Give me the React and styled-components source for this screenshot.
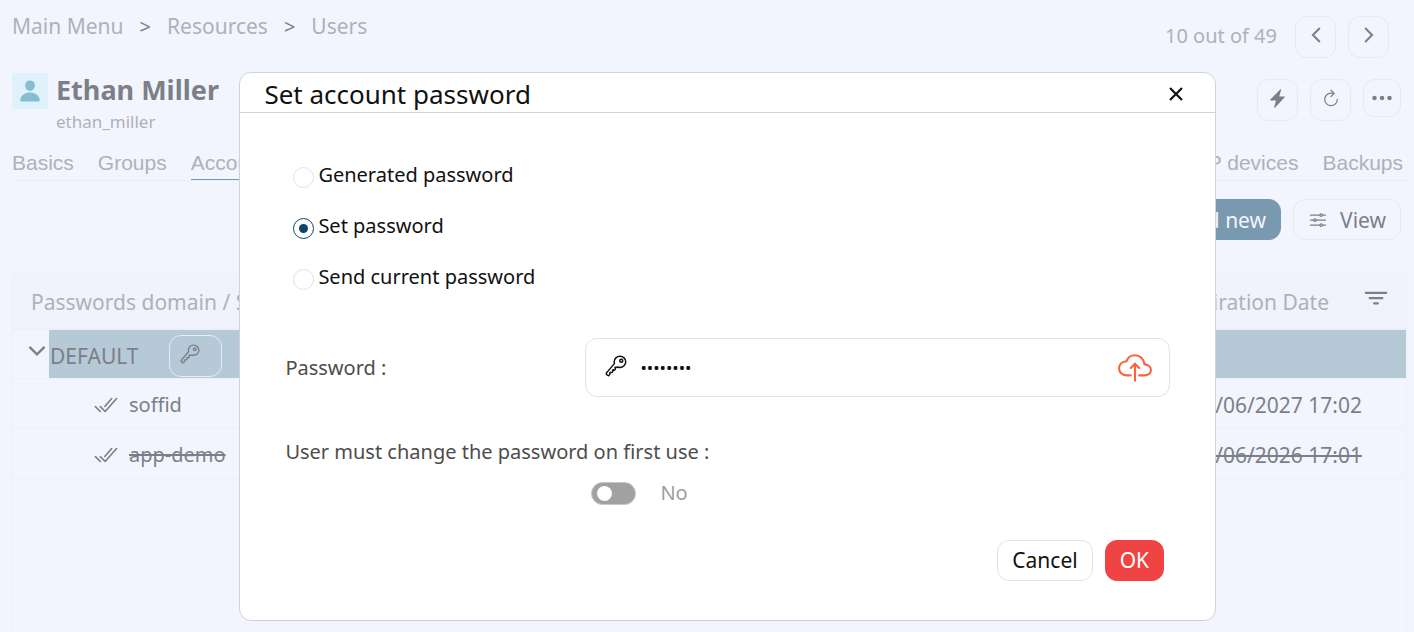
import React, { useState } from "react";
import styled, { createGlobalStyle } from "styled-components";
import {
  IoCheckmarkDoneOutline,
  IoChevronBackSharp,
  IoChevronDownSharp,
  IoChevronForwardSharp,
  IoCloseSharp,
  IoCloudUploadOutline,
  IoEllipsisHorizontal,
  IoFilter,
  IoKeyOutline,
  IoOptionsOutline,
  IoPerson,
  IoRefreshOutline,
} from "react-icons/io5";

const GlobalStyle = createGlobalStyle`
  * {
    box-sizing: border-box;
  }

  body {
    margin: 0;
    background: #f2f5fe;
    color: #7c7f88;
    font-family: "Noto Sans", sans-serif;
    font-size: 20px;
    line-height: 28px;
  }

  button,
  input {
    font: inherit;
    color: inherit;
  }
`;

const Page = styled.div`
  display: flex;
  flex-direction: column;
  min-height: 100vh;
  padding: 0 7px 0 12px;
`;

const TopBar = styled.header`
  display: flex;
  justify-content: space-between;
  align-items: flex-start;
  padding: 12px 18px 0 0;
`;

const Breadcrumb = styled.nav`
  display: flex;
  gap: 16px;
  font-size: 21px;

  a {
    color: #aeb1b9;
    text-decoration: none;
  }
`;

const Separator = styled.span`
  font-size: 20px;
  line-height: 30px;
`;

const Pager = styled.div`
  display: flex;
  align-items: center;
  gap: 12px;
  padding-top: 4px;
  color: #aeb1b9;
`;

const PagerText = styled.span`
  padding: 0 6px 2px 0;
`;

const IconButton = styled.button`
  display: flex;
  align-items: center;
  justify-content: center;
  width: ${(props) => (props.$small ? "38px" : "41px")};
  height: ${(props) => (props.$small ? "38px" : "42px")};
  padding: ${(props) => (props.$small ? "0" : "0 0 4px")};
  background: transparent;
  border: 1px solid #e6e9f2;
  border-radius: 12px;
  color: #7c7f88;
  cursor: pointer;
`;

const UserBar = styled.div`
  display: flex;
  justify-content: space-between;
  align-items: flex-start;
  padding: 15px 6px 0 0;
`;

const User = styled.div`
  display: flex;
  gap: 8px;
`;

const Avatar = styled.div`
  display: flex;
  align-items: center;
  justify-content: center;
  width: 36px;
  height: 36px;
  background: #dff1fa;
  color: #86bdd1;
`;

const UserName = styled.h1`
  margin: 0;
  font-size: 27px;
  line-height: 34px;
`;

const UserLogin = styled.div`
  margin-top: 3px;
  font-size: 17px;
  line-height: 24px;
  color: #aeb1b9;
`;

const Actions = styled.div`
  display: flex;
  align-items: flex-start;
  gap: 12px;
  padding-top: 6px;
`;

const Tabs = styled.nav`
  display: flex;
  justify-content: space-between;
  margin-top: 14px;
  border-bottom: 1px solid #e9edf6;
  font-family: "Liberation Sans", Arial, sans-serif;
  font-size: 21px;
`;

const TabGroup = styled.div`
  display: flex;
  gap: 24px;
  padding-right: 4px;
`;

const Tab = styled.a`
  height: 32px;
  padding-top: 1px;
  color: #aeb1b9;
  text-decoration: none;
  border-bottom: ${(props) => (props.$active ? "1px solid #7899b0" : "none")};
`;

const Toolbar = styled.div`
  display: flex;
  justify-content: flex-end;
  gap: 12px;
  padding: 18px 6px 0 0;
`;

const ToolButton = styled.button`
  display: flex;
  align-items: center;
  gap: 12px;
  height: 41px;
  padding: 0 14px;
  background: ${(props) => (props.$filled ? "#7899b0" : "transparent")};
  border: 1px solid ${(props) => (props.$filled ? "#7899b0" : "#e6e9f2")};
  border-radius: 12px;
  color: ${(props) => (props.$filled ? "#f2f5fe" : "#7c7f88")};
  font-size: 21px;
  cursor: pointer;
`;

const Panel = styled.div`
  flex: 1;
  margin-top: 33px;
  border: 1px solid #ecf0f8;
  border-bottom: none;
`;

const Table = styled.table`
  width: 100%;
  border-collapse: collapse;
`;

const HeadCell = styled.th`
  height: 55px;
  padding: 2px 18px 0;
  background: #f0f3fb;
  border-bottom: 2px solid #ecf0f8;
  color: #aeb1b9;
  font-size: 21px;
  font-weight: 400;
  text-align: left;
`;

const HeadTools = styled.div`
  display: flex;
  align-items: center;
  justify-content: flex-end;
  gap: 35px;
`;

const FilterButton = styled.button`
  display: flex;
  padding: 0 0 8px;
  background: none;
  border: none;
  color: #7c7f88;
  cursor: pointer;
`;

const ToggleCell = styled.td`
  width: 36px;
  padding: 0;
`;

const Cell = styled.td`
  height: ${(props) => (props.$selected ? "49px" : "50px")};
  padding: ${(props) => (props.$right ? "4px 44px 0 0" : "4px 2px 0 1px")};
  background: ${(props) => (props.$selected ? "#b6c9d7" : "transparent")};
  text-align: ${(props) => (props.$right ? "right" : "left")};
  font-size: ${(props) => (props.$right ? "21px" : "20px")};
`;

const Row = styled.tr`
  border-bottom: 1px solid #ecf0f8;
  text-decoration: ${(props) => (props.$disabled ? "line-through" : "none")};
`;

const ExpandButton = styled.button`
  display: flex;
  padding: 0 0 6px 12px;
  background: none;
  border: none;
  cursor: pointer;
`;

const Domain = styled.div`
  display: flex;
  align-items: center;
  gap: 30px;
  font-size: 21px;
`;

const KeyButton = styled.button`
  display: flex;
  align-items: center;
  width: 53px;
  height: 42px;
  padding: 0 0 4px 9px;
  background: transparent;
  border: 1px solid #e6ecf5;
  border-radius: 12px;
  cursor: pointer;
`;

const Account = styled.div`
  display: flex;
  align-items: center;
  gap: 10px;
  padding-left: 43px;
`;

const Overlay = styled.div`
  position: fixed;
  inset: 0;
  padding: 72px 14% 0 calc(17% - 1px);
`;

const Dialog = styled.section`
  background: #ffffff;
  border: 1px solid #d0d2d9;
  border-radius: 12px;
  color: #111111;
`;

const DialogHeader = styled.div`
  display: flex;
  align-items: center;
  justify-content: space-between;
  height: 40px;
  padding: 2px 27px 0 24px;
  border-bottom: 1px solid #d0d2d9;
`;

const DialogTitle = styled.h2`
  margin: 0;
  font-size: 26px;
  line-height: 34px;
  font-weight: 400;
`;

const CloseButton = styled.button`
  display: flex;
  padding: 0;
  background: none;
  border: none;
  cursor: pointer;
`;

const DialogForm = styled.form`
  padding: 36px 45px 39px;
`;

const Options = styled.div`
  display: flex;
  flex-direction: column;
  padding-left: 8px;
`;

const Option = styled.label`
  display: flex;
  gap: 4px;
  height: 51px;
  padding-top: 12px;
`;

const Radio = styled.input`
  appearance: none;
  display: grid;
  place-items: center;
  width: 21px;
  height: 21px;
  margin: 6px 0 0;
  border: 1px solid #e2e2e2;
  border-radius: 50%;
  background: #ffffff;

  &:checked {
    border-color: #0b456b;
  }

  &:checked::before {
    content: "";
    width: 9px;
    height: 9px;
    border-radius: 50%;
    background: #0b456b;
  }
`;

const Field = styled.div`
  display: flex;
  align-items: center;
  margin-top: 36px;
`;

const Label = styled.label`
  width: 300px;
  color: #4d4d4d;
`;

const PasswordBox = styled.div`
  display: flex;
  align-items: center;
  flex: 1;
  gap: 12px;
  height: 59px;
  padding: 0 17px 0 18px;
  border: 1px solid #e2e2e2;
  border-radius: 12px;
`;

const FieldIcon = styled.span`
  display: flex;
  padding-bottom: 4px;
`;

const PasswordInput = styled.input`
  flex: 1;
  min-width: 0;
  padding: 0;
  background: transparent;
  border: none;
  outline: none;
  font-size: 17px;
`;

const UploadButton = styled(CloseButton)`
  color: #f9633b;
`;

const ChangeField = styled.div`
  margin-top: 41px;
`;

const SwitchRow = styled.div`
  display: flex;
  align-items: center;
  gap: 24px;
  margin-top: 13px;
  padding-left: 306px;
  color: #9e9e9e;
`;

const Switch = styled.input`
  appearance: none;
  display: flex;
  align-items: center;
  width: 45px;
  height: 23px;
  margin: 0;
  padding: 0 5px;
  border: 1px solid #c8c8c8;
  border-radius: 12px;
  background: #a1a1a1;
  cursor: pointer;

  &::before {
    content: "";
    width: 15px;
    height: 15px;
    border-radius: 50%;
    background: #ffffff;
  }

  &:checked {
    justify-content: flex-end;
    background: #0b456b;
  }
`;

const DialogButtons = styled.div`
  display: flex;
  justify-content: flex-end;
  gap: 12px;
  margin-top: 33px;
  padding-right: 6px;
`;

const DialogButton = styled.button`
  height: 41px;
  padding: 0 14px 2px;
  background: ${(props) => (props.$primary ? "#f04444" : "#ffffff")};
  border: 1px solid ${(props) => (props.$primary ? "#f04444" : "#e2e2e2")};
  border-radius: 12px;
  color: ${(props) => (props.$primary ? "#ffffff" : "#111111")};
  font-size: 21px;
  cursor: pointer;
`;

const accounts = [
  { name: "soffid", expires: "12/06/2027 17:02", disabled: false },
  { name: "app-demo", expires: "12/06/2026 17:01", disabled: true },
];

const modes = ["Generated password", "Set password", "Send current password"];

function FlashIcon() {
  return (
    <svg width="15" height="19" viewBox="0 0 15 19" fill="currentColor">
      <path d="M10.4 0.3 L0.3 10.6 Q-0.1 11.4 0.8 11.5 L6 11.5 L4.1 18.2 Q4.4 19.2 5.2 18.5 L14.7 8.3 Q15.1 7.5 14.2 7.4 L9.2 7.4 L11.2 0.8 Q11 -0.2 10.4 0.3 Z" />
    </svg>
  );
}

function PasswordDialog() {
  const [mode, setMode] = useState("Set password");
  const [password, setPassword] = useState("password");
  const [mustChange, setMustChange] = useState(false);

  return (
    <Overlay>
      <Dialog role="dialog" aria-labelledby="dialog-title">
        <DialogHeader>
          <DialogTitle id="dialog-title">Set account password</DialogTitle>
          <CloseButton type="button" aria-label="Close">
            <IoCloseSharp size={24} />
          </CloseButton>
        </DialogHeader>
        <DialogForm onSubmit={(event) => event.preventDefault()}>
          <Options>
            {modes.map((item) => (
              <Option key={item}>
                <Radio
                  type="radio"
                  name="mode"
                  checked={mode === item}
                  onChange={() => setMode(item)}
                />
                {item}
              </Option>
            ))}
          </Options>
          <Field>
            <Label htmlFor="password">Password :</Label>
            <PasswordBox>
              <FieldIcon>
                <IoKeyOutline size={24} />
              </FieldIcon>
              <PasswordInput
                id="password"
                type="password"
                value={password}
                onChange={(event) => setPassword(event.target.value)}
              />
              <UploadButton type="button" aria-label="Upload">
                <IoCloudUploadOutline size={34} />
              </UploadButton>
            </PasswordBox>
          </Field>
          <ChangeField>
            <Label htmlFor="must-change">
              User must change the password on first use :
            </Label>
            <SwitchRow>
              <Switch
                id="must-change"
                type="checkbox"
                checked={mustChange}
                onChange={(event) => setMustChange(event.target.checked)}
              />
              <span>{mustChange ? "Yes" : "No"}</span>
            </SwitchRow>
          </ChangeField>
          <DialogButtons>
            <DialogButton type="button">Cancel</DialogButton>
            <DialogButton type="submit" $primary>
              OK
            </DialogButton>
          </DialogButtons>
        </DialogForm>
      </Dialog>
    </Overlay>
  );
}

function App() {
  return (
    <>
      <GlobalStyle />
      <Page>
        <TopBar>
          <Breadcrumb>
            <a href="#menu">Main Menu</a>
            <Separator>&gt;</Separator>
            <a href="#resources">Resources</a>
            <Separator>&gt;</Separator>
            <a href="#users">Users</a>
          </Breadcrumb>
          <Pager>
            <PagerText>10 out of 49</PagerText>
            <IconButton aria-label="Previous">
              <IoChevronBackSharp size={22} />
            </IconButton>
            <IconButton aria-label="Next">
              <IoChevronForwardSharp size={22} />
            </IconButton>
          </Pager>
        </TopBar>

        <UserBar>
          <User>
            <Avatar>
              <IoPerson size={24} />
            </Avatar>
            <div>
              <UserName>Ethan Miller</UserName>
              <UserLogin>ethan_miller</UserLogin>
            </div>
          </User>
          <Actions>
            <IconButton aria-label="Run">
              <FlashIcon />
            </IconButton>
            <IconButton aria-label="Refresh">
              <IoRefreshOutline size={20} />
            </IconButton>
            <IconButton aria-label="More" $small>
              <IoEllipsisHorizontal size={24} />
            </IconButton>
          </Actions>
        </UserBar>

        <Tabs>
          <TabGroup>
            <Tab href="#basics">Basics</Tab>
            <Tab href="#groups">Groups</Tab>
            <Tab href="#accounts" $active>
              Accounts
            </Tab>
          </TabGroup>
          <TabGroup>
            <Tab href="#otp">OTP devices</Tab>
            <Tab href="#backups">Backups</Tab>
          </TabGroup>
        </Tabs>

        <Toolbar>
          <ToolButton $filled>Add new</ToolButton>
          <ToolButton>
            <IoOptionsOutline size={20} />
            View
          </ToolButton>
        </Toolbar>

        <Panel>
          <Table>
            <thead>
              <tr>
                <HeadCell colSpan={2}>Passwords domain / System</HeadCell>
                <HeadCell>
                  <HeadTools>
                    Expiration Date
                    <FilterButton aria-label="Filter">
                      <IoFilter size={24} />
                    </FilterButton>
                  </HeadTools>
                </HeadCell>
              </tr>
            </thead>
            <tbody>
              <Row>
                <ToggleCell>
                  <ExpandButton aria-label="Collapse">
                    <IoChevronDownSharp size={24} />
                  </ExpandButton>
                </ToggleCell>
                <Cell $selected>
                  <Domain>
                    DEFAULT
                    <KeyButton aria-label="Set password">
                      <IoKeyOutline size={22} />
                    </KeyButton>
                  </Domain>
                </Cell>
                <Cell $selected $right />
              </Row>
              {accounts.map((account) => (
                <Row key={account.name} $disabled={account.disabled}>
                  <ToggleCell />
                  <Cell>
                    <Account>
                      <IoCheckmarkDoneOutline size={26} />
                      <span>{account.name}</span>
                    </Account>
                  </Cell>
                  <Cell $right>{account.expires}</Cell>
                </Row>
              ))}
            </tbody>
          </Table>
        </Panel>
      </Page>
      <PasswordDialog />
    </>
  );
}

export default App;
